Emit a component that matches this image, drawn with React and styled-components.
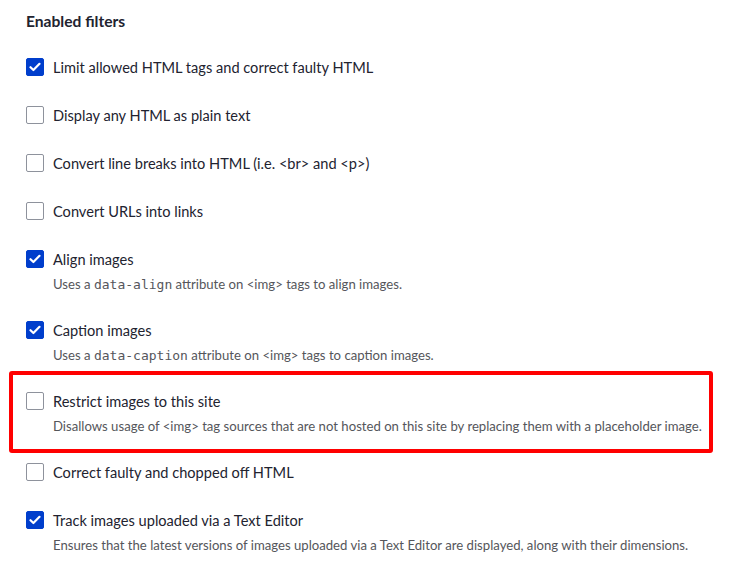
import React from 'react'
import styled, { createGlobalStyle } from 'styled-components'

const GlobalStyle = createGlobalStyle`
  body {
    margin: 0;
    background: #ffffff;
    font-family: Lato, "Liberation Sans", sans-serif;
    color: #222330;
  }
`

const Page = styled.div`
  padding: 12px 26px 0 26px;
`

const Heading = styled.h4`
  margin: -1px 0 27px 0;
  font-size: 15.6px;
  line-height: 20px;
  font-weight: 700;
  color: #222330;
`

const List = styled.div`
  display: flex;
  flex-direction: column;
  gap: 28px;
`

const Item = styled.div`
  position: relative;
  display: flex;
  align-items: flex-start;
  gap: 9px;

  ${p => p.highlight && `
    &::before {
      content: '';
      position: absolute;
      top: -21px;
      bottom: -18px;
      left: -17px;
      right: -7px;
      border: 4px solid #ff0000;
      border-radius: 3px;
      pointer-events: none;
    }
  `}
`

const Box = styled.span`
  flex: none;
  box-sizing: border-box;
  width: 18px;
  height: 18px;
  border-radius: 2px;
  display: flex;
  align-items: center;
  justify-content: center;
  background: ${p => (p.checked ? '#003ecc' : '#ffffff')};
  border: 1px solid ${p => (p.checked ? '#003ecc' : '#8e929c')};
`

const Text = styled.div`
  display: flex;
  flex-direction: column;
`

const Label = styled.span`
  font-size: 14.6px;
  line-height: 20px;
  color: #222330;
`

const Desc = styled.span`
  margin-top: 6px;
  font-size: 13.15px;
  line-height: 17px;
  color: #55565b;
`

const Code = styled.code`
  font-family: "DejaVu Sans Mono", "Liberation Mono", monospace;
  font-size: 13px;
`

const Check = () => (
  <svg width="12" height="10" viewBox="0 0 12 10">
    <path d="M1.5 5.2 L4.4 8 L10.5 1.8" fill="none" stroke="#fff" strokeWidth="2.2" strokeLinecap="round" strokeLinejoin="round" />
  </svg>
)

const filters = [
  { label: 'Limit allowed HTML tags and correct faulty HTML', checked: true },
  { label: 'Display any HTML as plain text' },
  { label: 'Convert line breaks into HTML (i.e. <br> and <p>)' },
  { label: 'Convert URLs into links' },
  {
    label: 'Align images',
    checked: true,
    desc: <>Uses a <Code>data-align</Code> attribute on &lt;img&gt; tags to align images.</>,
  },
  {
    label: 'Caption images',
    checked: true,
    desc: <>Uses a <Code>data-caption</Code> attribute on &lt;img&gt; tags to caption images.</>,
  },
  {
    label: 'Restrict images to this site',
    highlight: true,
    desc: 'Disallows usage of <img> tag sources that are not hosted on this site by replacing them with a placeholder image.',
  },
  { label: 'Correct faulty and chopped off HTML' },
  {
    label: 'Track images uploaded via a Text Editor',
    checked: true,
    desc: 'Ensures that the latest versions of images uploaded via a Text Editor are displayed, along with their dimensions.',
  },
]

export default function App() {
  return (
    <>
      <GlobalStyle />
      <Page>
        <Heading>Enabled filters</Heading>
        <List>
          {filters.map(f => (
            <Item key={f.label} highlight={f.highlight}>
              <Box checked={f.checked}>{f.checked && <Check />}</Box>
              <Text>
                <Label>{f.label}</Label>
                {f.desc && <Desc>{f.desc}</Desc>}
              </Text>
            </Item>
          ))}
        </List>
      </Page>
    </>
  )
}
